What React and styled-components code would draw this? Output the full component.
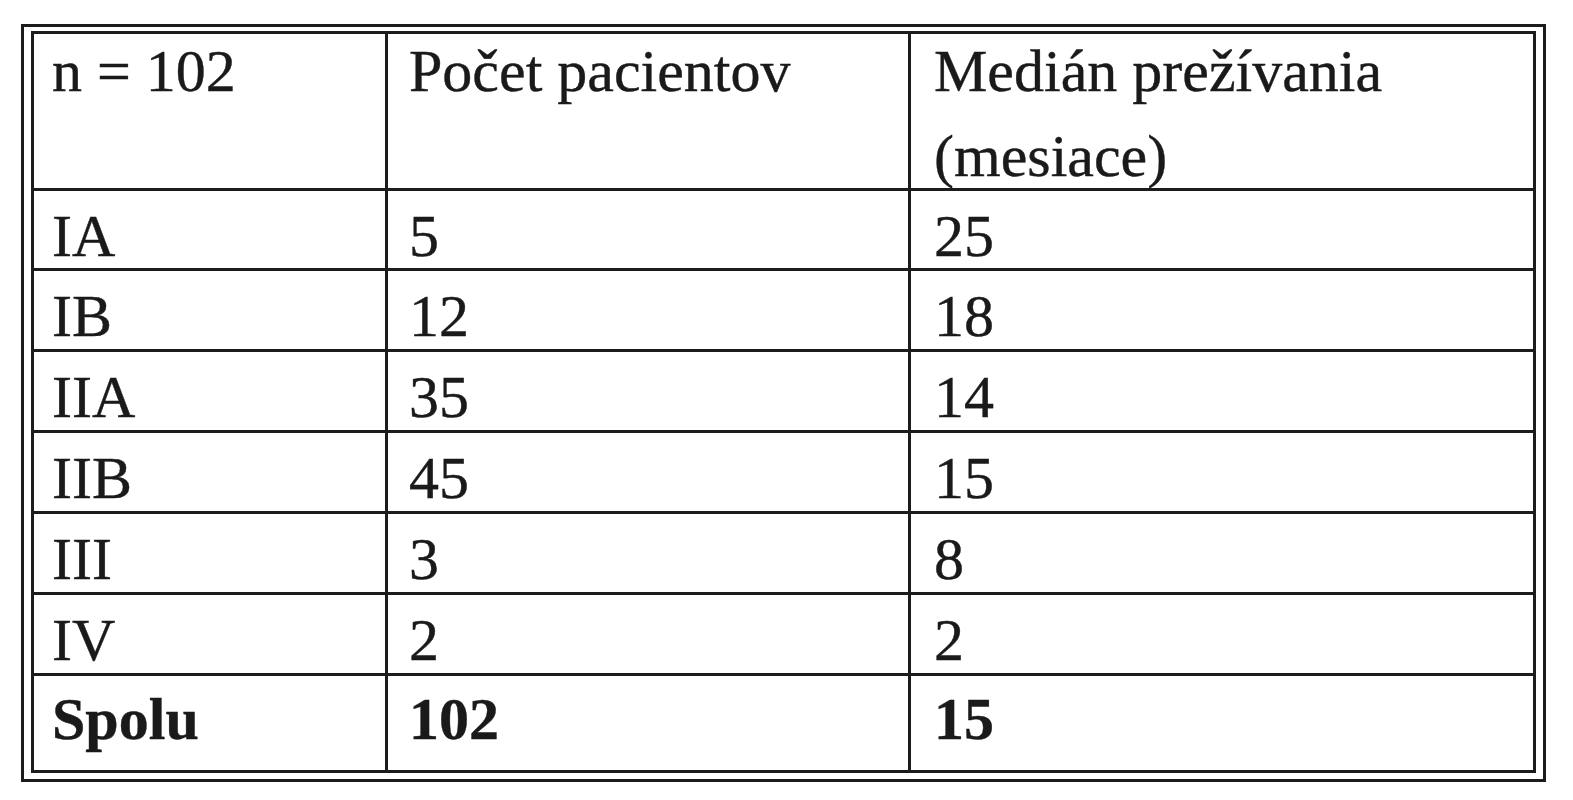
import React from 'react'
import styled, { createGlobalStyle } from 'styled-components'

const Global = createGlobalStyle`
  html, body {
    margin: 0;
    padding: 0;
    background: #ffffff;
  }
  body {
    font-family: "Liberation Serif", "Times New Roman", serif;
    color: #1a1a1a;
  }
`

const Frame = styled.div`
  box-sizing: border-box;
  width: 1525px;
  margin: 24px 0 0 21px;
  border: 3px solid #1c1c1c;
  padding: 4px 7px 6px 7px;
`

const Grid = styled.div`
  display: grid;
  grid-template-columns: 354px 523px 1fr;
  border: 3px solid #1c1c1c;
`

const Cell = styled.div`
  box-sizing: border-box;
  height: ${p => p.$h}px;
  padding: ${p => p.$top}px 0 0 ${p => p.$left}px;
  border-right: ${p => (p.$last ? 'none' : '3px solid #1c1c1c')};
  border-bottom: ${p => (p.$bottom ? 'none' : '3px solid #1c1c1c')};
  font-size: 60px;
  line-height: normal;
  font-weight: ${p => (p.$bold ? 700 : 400)};
  -webkit-text-stroke: 0.4px #1a1a1a;
  white-space: nowrap;
`

const HeadText = styled.div`
  line-height: 85px;
  margin-top: -5px;
`

const head = ['n = 102', 'Počet pacientov', ['Medián prežívania', '(mesiace)']]

const rows = [
  ['IA', '5', '25'],
  ['IB', '12', '18'],
  ['IIA', '35', '14'],
  ['IIB', '45', '15'],
  ['III', '3', '8'],
  ['IV', '2', '2'],
]

const heights = [80, 81, 81, 81, 81, 81]
const lefts = [18, 21, 23]

const App = () => {
  return (
    <>
      <Global />
      <Frame>
        <Grid>
          {head.map((h, i) => (
            <Cell key={'h' + i} $h={157} $top={0} $left={lefts[i]} $last={i === 2}>
              <HeadText>
                {Array.isArray(h) ? (
                  <>
                    {h[0]}
                    <br />
                    {h[1]}
                  </>
                ) : (
                  h
                )}
              </HeadText>
            </Cell>
          ))}
          {rows.map((r, ri) =>
            r.map((c, ci) => (
              <Cell key={ri + '-' + ci} $h={heights[ri]} $top={11} $left={lefts[ci]} $last={ci === 2}>
                {c}
              </Cell>
            ))
          )}
          {['Spolu', '102', '15'].map((c, ci) => (
            <Cell key={'s' + ci} $h={94} $top={9} $left={lefts[ci]} $last={ci === 2} $bottom $bold>
              {c}
            </Cell>
          ))}
        </Grid>
      </Frame>
    </>
  )
}

export default App
